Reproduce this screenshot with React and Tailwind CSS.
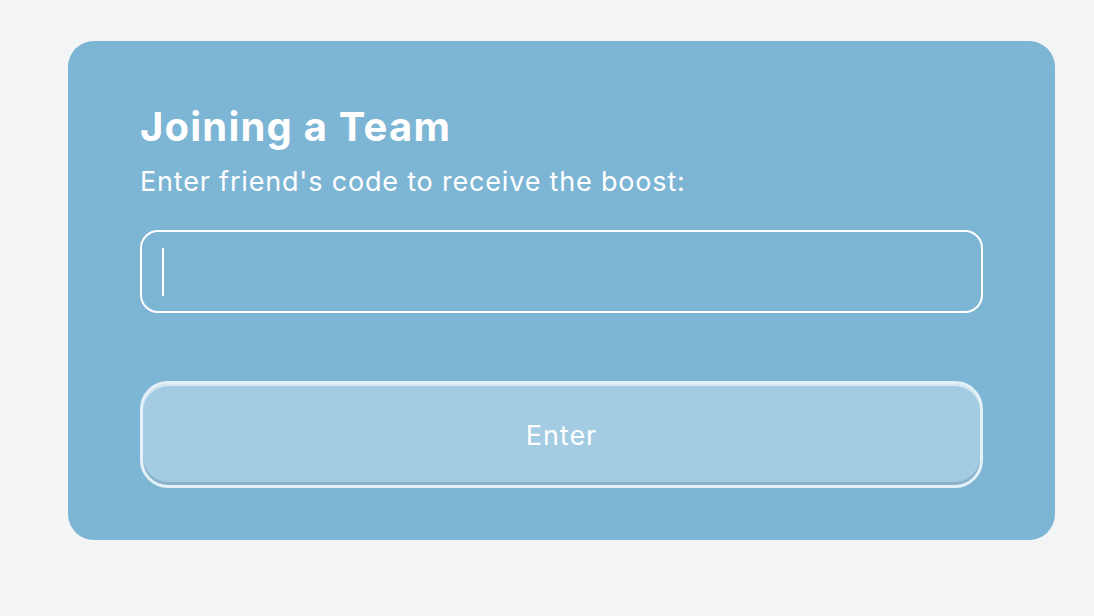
import React, { useState } from 'react';

const JoinTeamCard = () => {
  const [code, setCode] = useState('');

  return (
    <div className="ml-[68px] w-[987px] rounded-[26px] bg-[#7db5d5] px-[72px] pt-[62px] pb-[52px]">
      <h2 className="text-[40px] font-bold leading-[48px] tracking-[0.03em] text-white">Joining a Team</h2>
      <p className="mt-[15px] text-[27px] leading-[32px] tracking-[0.03em] text-white">Enter friend's code to receive the boost:</p>

      <div className="mt-[32px] flex h-[83px] items-center rounded-[18px] border-2 border-white px-[20px]">
        <span className="h-[48px] w-[1.5px] bg-white" />
        <input
          className="h-full flex-1 bg-transparent text-[24px] text-white outline-none"
          value={code}
          onChange={(e) => setCode(e.target.value)}
        />
      </div>

      <button
        className="mt-[68px] flex h-[107px] w-full items-center justify-center rounded-[28px] border-[3px] border-[#e4f0f8] bg-[#a3cbe2] pt-[4px] text-[27px] tracking-[0.035em] text-white shadow-[inset_0_-3px_1px_rgba(60,100,130,0.25),inset_0_2px_1px_rgba(255,255,255,0.6)]"
      >
        Enter
      </button>
    </div>
  );
};

export default function App() {
  return (
    <div className="min-h-screen bg-[#f3f4f6] pt-[41px] pb-[76px] font-['Inter',sans-serif]">
      <JoinTeamCard />
    </div>
  );
}
